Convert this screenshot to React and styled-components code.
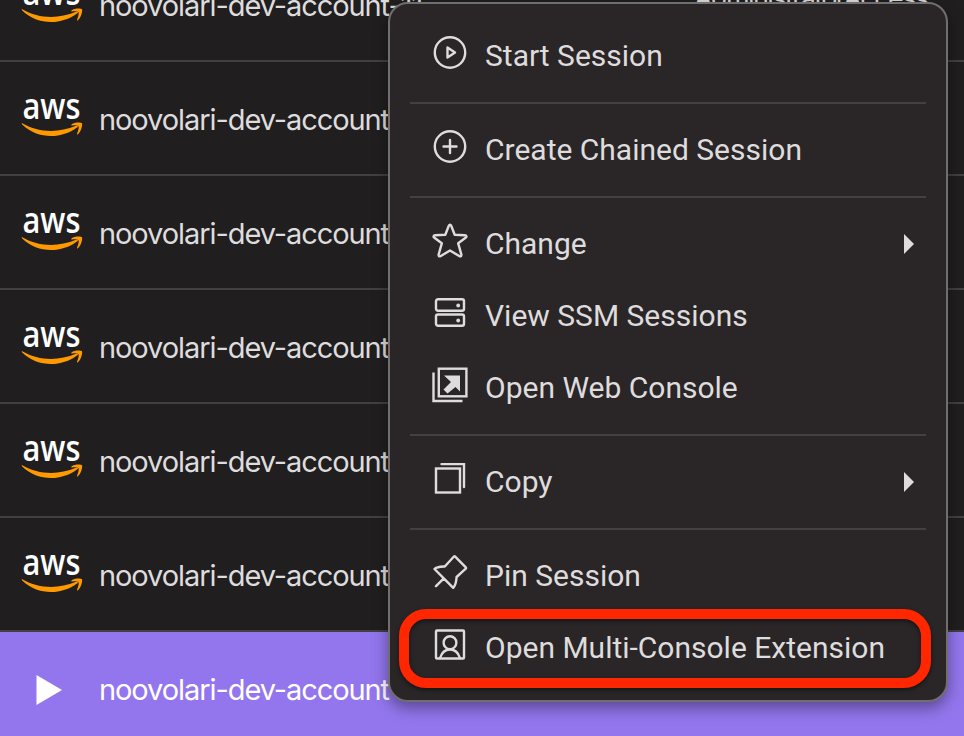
import React from "react";
import styled, { createGlobalStyle } from "styled-components";

const Global = createGlobalStyle`
  * { box-sizing: border-box; }
  body { margin: 0; background: #201e1f; overflow: hidden; }
`;

const Page = styled.main`
  position: relative;
  width: 964px;
  height: 736px;
  overflow: hidden;
  background: #201e1f;
`;

const SessionList = styled.div`
  display: flex;
  flex-direction: column;
  margin-top: -52px;
`;

const SessionRow = styled.div`
  display: grid;
  grid-template-columns: 99px 595px 1fr;
  align-items: center;
  flex: none;
  height: 114px;
  border-bottom: 2px solid ${(p) => (p.$active ? "#9376ee" : "#424142")};
  background: ${(p) => (p.$active ? "#9376ee" : "transparent")};
  color: ${(p) => (p.$active ? "#ffffff" : "#dedcdd")};
`;

const ProviderCell = styled.div`
  display: flex;
  padding: ${(p) => (p.$active ? "4px 0 0 36px" : "0 0 2px 20px")};
  svg { display: block; }
`;

const SessionName = styled.span`
  font: 400 29px/36px Inter, sans-serif;
  letter-spacing: -1.08px;
  white-space: nowrap;
  padding-top: 4px;
`;

const RoleName = styled.span`
  font: 400 27px/36px Inter, sans-serif;
  letter-spacing: -1.6px;
  white-space: nowrap;
  padding-bottom: 11px;
`;

const Menu = styled.nav`
  position: absolute;
  left: 388px;
  top: 2px;
  width: 560px;
  height: 700px;
  padding: 16px 20px;
  border: 2px solid #706e6e;
  border-radius: 20px;
  background: #2a2627;
  box-shadow: 0 6px 16px rgba(0, 0, 0, 0.4);
`;

const MenuItem = styled.div`
  display: flex;
  align-items: center;
  height: 72px;
  padding: 0 12px 0 22px;
  color: #dedcdd;
`;

const IconBox = styled.span`
  display: flex;
  width: 36px;
  height: 36px;
  margin: -7px 17px 0 0;
`;

const Label = styled.span`
  flex: 1;
  font: 400 30px/36px Roboto, sans-serif;
  white-space: nowrap;
`;

const Divider = styled.hr`
  height: 2px;
  margin: 10px 0;
  border: 0;
  background: #424142;
`;

const Highlight = styled.div`
  position: absolute;
  left: 9px;
  top: 605px;
  width: 532px;
  height: 79px;
  border: 10px solid #ff2600;
  border-radius: 27px;
  box-shadow: 0 2px 4px rgba(0, 0, 0, 0.5), inset 0 2px 4px rgba(0, 0, 0, 0.5);
`;

const AwsLogo = () => (
  <svg width="64" height="44" viewBox="0 0 64 44">
    <text x="2.500" y="23.500" fill="#fff" fontFamily="Open Sans, sans-serif" fontWeight="600" fontSize="36" textLength="58" lengthAdjust="spacingAndGlyphs">aws</text>
    <path d="M2.200 28.200C19 37.800 38 38.200 56 30.800C58 30 58.600 31.400 57 32.600C41 44.600 17 44.200 2.200 29.600C1.600 29 1.600 27.800 2.200 28.200Z" fill="#ff9900" />
    <path d="M51.500 29.400C54 27 61 27.100 61.900 28.100C62.800 29.500 61.400 36.500 57.900 39.300C57.300 39.700 56.800 39.500 57 38.800C58 36.200 59.300 32.500 58.400 31.200C57.600 30.200 54.500 30.200 52 30.500C51.200 30.500 50.900 29.900 51.500 29.400Z" fill="#ff9900" />
  </svg>
);

const PlayArrow = () => (
  <svg width="27" height="32" viewBox="0 0 27 32"><path d="M.5 1L26 16L.5 31Z" fill="#fff" /></svg>
);

const Submenu = () => (
  <svg width="10" height="20" viewBox="0 0 10 20"><path d="M0 0L10 10L0 20Z" fill="#dedcdd" /></svg>
);

const Glyph = ({ children }) => (
  <svg width="36" height="36" viewBox="0 0.500 36 36" fill="none" stroke="currentColor" strokeWidth="2.400" strokeLinecap="round" strokeLinejoin="round">
    {children}
  </svg>
);

const icons = {
  play: <><circle cx="18" cy="18" r="15.200" /><path d="M15.500 13L23 18L15.500 23Z" /></>,
  plus: <><circle cx="18" cy="18" r="15.200" /><path d="M18 11.500V24.500M11.500 18H24.500" /></>,
  star: <path d="M18 2.200C18.700 2.200 19 2.800 19.300 3.500L22.700 12.200L32.700 12.800C34.700 13 35 14.300 33.600 15.300L26.200 20.800L29.300 31.800C29.700 33.700 28.500 34.300 27.200 33.500L18 28L8.800 33.500C7.500 34.300 6.300 33.700 6.700 31.800L9.800 20.800L2.400 15.300C1 14.300 1.300 13 3.300 12.800L13.300 12.200L16.700 3.500C17 2.800 17.300 2.200 18 2.200Z" />,
  server: <><rect x="4" y="4.800" width="28" height="11.400" rx="2" /><rect x="4" y="20" width="28" height="11.200" rx="2" /><circle cx="26.200" cy="11" r="1.900" fill="currentColor" stroke="none" /><circle cx="26.200" cy="26" r="1.900" fill="currentColor" stroke="none" /></>,
  web: <><rect x="6.800" y="2.200" width="27.600" height="27.600" strokeLinejoin="miter" /><path d="M1.500 6V34.500H30.500" strokeLinecap="butt" strokeLinejoin="miter" /><path d="M12 9H28V25L23.500 20.500L15.500 27L11.500 23L19 15.500Z" fill="currentColor" stroke="none" /></>,
  copy: <><rect x="4" y="8" width="24" height="24" strokeLinejoin="miter" /><path d="M9.500 3.600H32V26.500" strokeLinejoin="miter" /></>,
  pin: <path d="M23.200 2.200L33.800 12.800Q34.500 14 33.200 14.700L24.600 22.500C24.300 27 23.600 31 21.200 33.300L2.500 14.500C4.500 12.200 8.500 12.200 12.800 12L21.700 2.300Q22.500 1.500 23.200 2.200ZM11.800 23.900L4 31.700" />,
  user: <><rect x="4" y="4" width="28" height="28" rx="1" /><circle cx="18" cy="16.200" r="6.400" /><path d="M8 31.500C9.800 26 13.200 23 18 23C22.800 23 26.200 26 28 31.500" /></>,
};

const groups = [
  [["play", "Start Session"]],
  [["plus", "Create Chained Session"]],
  [["star", "Change", true], ["server", "View SSM Sessions"], ["web", "Open Web Console"]],
  [["copy", "Copy", true]],
  [["pin", "Pin Session"], ["user", "Open Multi-Console Extension"]],
];

const sessions = Array.from({ length: 7 }, (_, i) => ({
  name: i === 0 ? "noovolari-dev-account-11" : "noovolari-dev-account",
  role: i === 0 ? "AdministratorAccess" : "",
  active: i === 6,
}));

export default function App() {
  return (
    <>
      <Global />
      <Page>
        <SessionList>
          {sessions.map((s, i) => (
            <SessionRow key={i} $active={s.active}>
              <ProviderCell $active={s.active}>{s.active ? <PlayArrow /> : <AwsLogo />}</ProviderCell>
              <SessionName>{s.name}</SessionName>
              <RoleName>{s.role}</RoleName>
            </SessionRow>
          ))}
        </SessionList>
        <Menu>
          {groups.map((items, g) => (
            <React.Fragment key={g}>
              {g > 0 && <Divider />}
              {items.map(([icon, label, sub]) => (
                <MenuItem key={label}>
                  <IconBox><Glyph>{icons[icon]}</Glyph></IconBox>
                  <Label>{label}</Label>
                  {sub && <Submenu />}
                </MenuItem>
              ))}
            </React.Fragment>
          ))}
          <Highlight />
        </Menu>
      </Page>
    </>
  );
}
